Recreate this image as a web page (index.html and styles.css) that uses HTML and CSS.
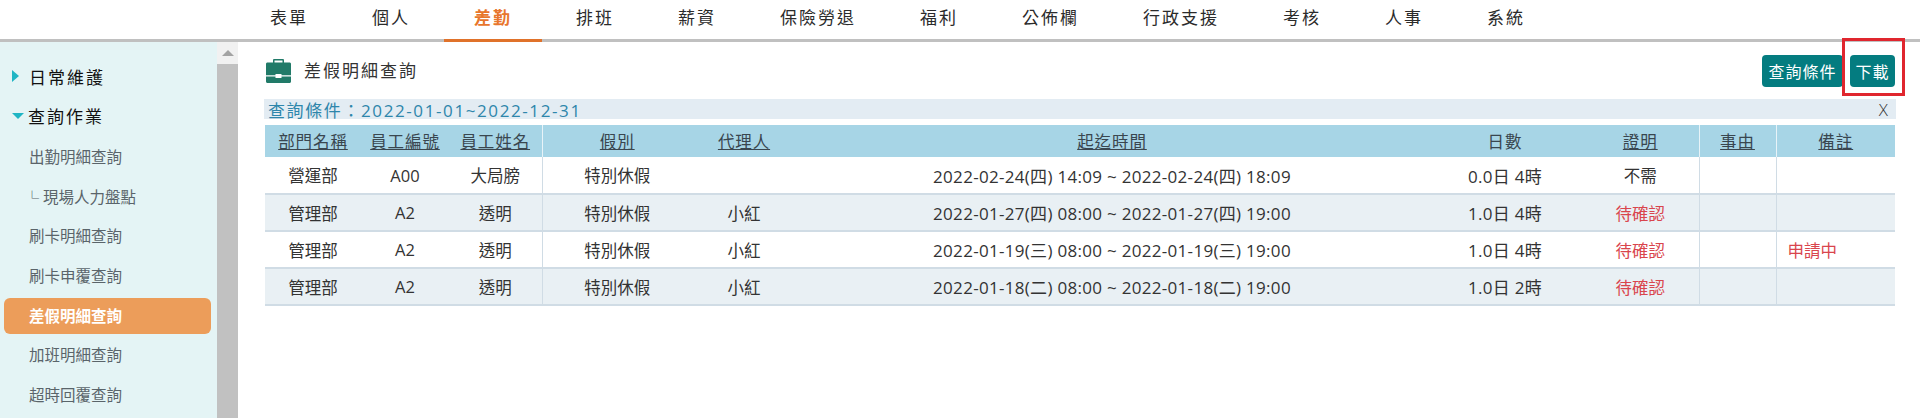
FILE: index.html
```html
<!DOCTYPE html>
<html lang="zh-Hant">
<head>
<meta charset="utf-8">
<title>差假明細查詢</title>
<link rel="stylesheet" href="styles.css">
</head>
<body>
<header class="topnav">
  <a class="tab">表單</a>
  <a class="tab">個人</a>
  <a class="tab active">差勤</a>
  <a class="tab">排班</a>
  <a class="tab">薪資</a>
  <a class="tab">保險勞退</a>
  <a class="tab">福利</a>
  <a class="tab">公佈欄</a>
  <a class="tab">行政支援</a>
  <a class="tab">考核</a>
  <a class="tab">人事</a>
  <a class="tab">系統</a>
</header>
<div class="layout">
  <aside class="sidebar">
    <nav class="menu">
      <div class="group"><span class="caret-right"></span>日常維護</div>
      <div class="group open"><span class="caret-down"></span>查詢作業</div>
      <a class="item">出勤明細查詢</a>
      <a class="item sub"><span class="corner">└</span>現場人力盤點</a>
      <a class="item">刷卡明細查詢</a>
      <a class="item">刷卡申覆查詢</a>
      <a class="item current">差假明細查詢</a>
      <a class="item">加班明細查詢</a>
      <a class="item">超時回覆查詢</a>
    </nav>
    <div class="scrollbar">
      <div class="scroll-up"><span class="arrow-up"></span></div>
      <div class="scroll-thumb"></div>
    </div>
  </aside>
  <main class="content">
    <div class="titlebar">
      <svg class="case-icon" viewBox="0 0 25 24" width="25" height="24" aria-hidden="true">
        <path fill="#217a68" d="M7 4V1.200C7 .5 7.500 0 8.200 0h8.600C17.500 0 18 .5 18 1.200V4h-1.500V1.500h-8V4z"/>
        <path fill="#217a68" d="M0 5c0-1 .7-1.500 1.500-1.500h22C24.300 3.500 25 4 25 5v11.200H0z"/>
        <path fill="#217a68" d="M0 17.500h25v5c0 .9-.6 1.500-1.500 1.500h-22C.6 24 0 23.400 0 22.500z"/>
        <rect x="9.500" y="15" width="6" height="4" fill="#fff"/>
      </svg>
      <h1 class="title">差假明細查詢</h1>
      <div class="actions">
        <button class="btn">查詢條件</button>
        <button class="btn download">下載</button>
        <span class="highlight"></span>
      </div>
    </div>
    <div class="condition"><span>查詢條件：2022-01-01~2022-12-31</span><span class="close">X</span></div>
    <table class="grid">
      <colgroup>
        <col class="c-dept"><col class="c-no"><col class="c-name"><col class="c-type"><col class="c-agent"><col class="c-time"><col class="c-days"><col class="c-proof"><col class="c-reason"><col class="c-note">
      </colgroup>
      <thead>
        <tr>
          <th><u>部門名稱</u></th><th><u>員工編號</u></th><th class="line"><u>員工姓名</u></th><th><u>假別</u></th><th><u>代理人</u></th><th><u>起迄時間</u></th><th>日數</th><th class="line"><u>證明</u></th><th class="line"><u>事由</u></th><th><u>備註</u></th>
        </tr>
      </thead>
      <tbody>
        <tr>
          <td>營運部</td><td>A00</td><td class="line">大局膀</td><td>特別休假</td><td></td><td class="wide">2022-02-24(四) 14:09 ~ 2022-02-24(四) 18:09</td><td class="wide">0.0日 4時</td><td class="line">不需</td><td class="line"></td><td></td>
        </tr>
        <tr>
          <td>管理部</td><td>A2</td><td class="line">透明</td><td>特別休假</td><td>小紅</td><td class="wide">2022-01-27(四) 08:00 ~ 2022-01-27(四) 19:00</td><td class="wide">1.0日 4時</td><td class="line red">待確認</td><td class="line"></td><td></td>
        </tr>
        <tr>
          <td>管理部</td><td>A2</td><td class="line">透明</td><td>特別休假</td><td>小紅</td><td class="wide">2022-01-19(三) 08:00 ~ 2022-01-19(三) 19:00</td><td class="wide">1.0日 4時</td><td class="line red">待確認</td><td class="line"></td><td class="red note">申請中</td>
        </tr>
        <tr>
          <td>管理部</td><td>A2</td><td class="line">透明</td><td>特別休假</td><td>小紅</td><td class="wide">2022-01-18(二) 08:00 ~ 2022-01-18(二) 19:00</td><td class="wide">1.0日 2時</td><td class="line red">待確認</td><td class="line"></td><td></td>
        </tr>
      </tbody>
    </table>
  </main>
</div>
</body>
</html>
```

FILE: styles.css
```css
* { box-sizing: border-box; }
html, body { margin: 0; height: 418px; overflow: hidden; background: #fff; }
body { font-family: "Open Sans", "Noto Sans CJK TC", sans-serif; color: #222; }

.topnav {
  display: flex;
  gap: 4px;
  height: 42px;
  padding-left: 240px;
  border-bottom: 3px solid #c0c0c0;
}
.tab {
  height: 42px;
  padding: 0 30px;
  font-size: 17px;
  letter-spacing: 2px;
  line-height: 36px;
  color: #2b2b2b;
  white-space: nowrap;
}
.tab.active {
  color: #e8762c;
  font-weight: 700;
  border-bottom: 3px solid #e0722a;
}

.layout { display: flex; height: 376px; }

.sidebar { display: flex; width: 238px; flex: none; background: #e4f4f5; }
.menu { flex: 1; display: flex; flex-direction: column; padding: 14px 6px 0 4px; }
.group {
  display: flex;
  align-items: center;
  flex: none;
  height: 40px;
  padding-left: 8px;
  font-size: 17px;
  letter-spacing: 2px;
  color: #111;
}
.group.open { height: 39px; margin-bottom: 4px; }
.caret-right {
  width: 0; height: 0;
  margin: 0 10px 0 0;
  border-left: 7px solid #1fb5c4;
  border-top: 6px solid transparent;
  border-bottom: 6px solid transparent;
}
.caret-down {
  width: 0; height: 0;
  margin-right: 4px;
  border-top: 6px solid #1fb5c4;
  border-left: 6px solid transparent;
  border-right: 6px solid transparent;
}
.item {
  display: block;
  flex: none;
  height: 36px;
  margin-bottom: 3.67px;
  padding-left: 25px;
  border-radius: 6px;
  font-size: 15.5px;
  line-height: 36px;
  color: #5a646a;
}
.item.sub { padding-left: 21px; }
.corner { display: inline-block; width: 18px; font-size: 14px; line-height: 1; font-family: "Noto Sans CJK TC", sans-serif; }
.item.current { background: #ec9d5a; color: #fff; font-weight: 700; }

.scrollbar { display: flex; flex-direction: column; width: 21px; background: #f1f1f1; }
.scroll-up { display: flex; align-items: center; justify-content: center; height: 22px; }
.arrow-up {
  width: 0; height: 0;
  border-bottom: 6px solid #a3a3a3;
  border-left: 6px solid transparent;
  border-right: 6px solid transparent;
}
.scroll-thumb { flex: 1; background: #c1c1c1; }

.content { flex: 1; min-width: 0; padding: 13px 24px 0 26px; }
.titlebar { display: flex; align-items: center; height: 32px; padding: 0 1px 0 2px; }
.case-icon { flex: none; }
.title {
  margin: 0 0 3px 13px;
  font-size: 17px;
  font-weight: 400;
  letter-spacing: 2px;
  color: #333;
}
.actions { position: relative; display: flex; gap: 7px; margin-left: auto; }
.btn {
  height: 32px;
  padding: 0;
  border: 0;
  border-radius: 4px;
  background: #047c80;
  color: #fff;
  font: inherit;
  font-size: 16px;
  letter-spacing: 1px;
  white-space: nowrap;
  width: 81px;
}
.btn.download { width: 45px; }
.highlight {
  position: absolute;
  top: -17px;
  right: -10px;
  width: 63px;
  height: 58px;
  border: 3px solid #e0262e;
  pointer-events: none;
}

.condition {
  display: flex;
  justify-content: space-between;
  align-items: center;
  height: 20px;
  margin-top: 12px;
  padding: 0 8px 0 4px;
  background: #e3ecf3;
  font-size: 17px;
  letter-spacing: 1.600px;
  color: #2e86ab;
}
.close { color: #333; letter-spacing: 0; font-weight: 300; }

.grid {
  width: 1630px;
  margin: 6px 0 0 1px;
  border-collapse: collapse;
  table-layout: fixed;
  font-size: 16.5px;
}
.c-dept { width: 96px; }
.c-no { width: 88px; }
.c-name { width: 93px; }
.c-type { width: 150px; }
.c-agent { width: 104px; }
.c-time { width: 632px; }
.c-days { width: 154px; }
.c-proof { width: 117px; }
.c-reason { width: 77px; }
.c-note { width: 119px; }

.grid th {
  height: 32px;
  padding: 0;
  background: #a7d5e6;
  font-weight: 400;
  letter-spacing: .9px;
  color: #39464f;
}
.grid th.line { border-right: 1px solid #e8f3f8; }
.grid td {
  height: 37px;
  padding: 0;
  text-align: center;
  border-bottom: 2px solid #d0dce5;
  color: #333;
}
.grid td.wide { font-size: 17px; letter-spacing: .3px; }
.grid td.line { border-right: 1px solid #d0dce5; }
.grid tbody tr:nth-child(even) td { background: #e9f0f4; }
.grid td.red { color: #d9454d; }
.grid td.note { text-align: left; padding-left: 11px; }
```
